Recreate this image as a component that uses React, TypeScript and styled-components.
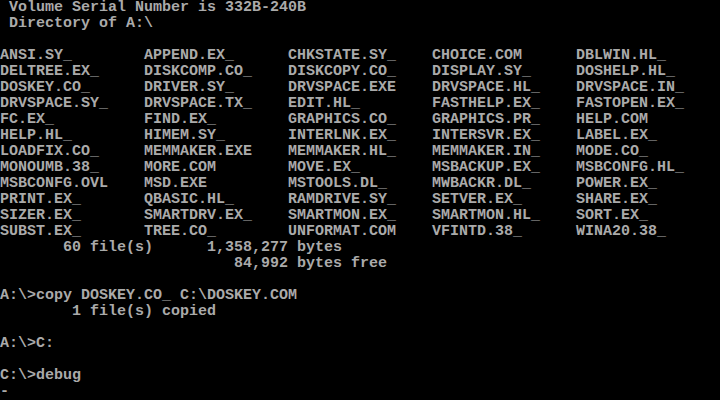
import styled, { createGlobalStyle } from "styled-components";

const GlobalStyle = createGlobalStyle`
  html, body {
    margin: 0;
    padding: 0;
    background: #000;
  }
`;

const Screen = styled.div`
  width: 720px;
  height: 400px;
  overflow: hidden;
  background: #000;
  color: #aaaaaa;
  font-family: "Liberation Mono", "DejaVu Sans Mono", monospace;
  font-size: 15px;
  font-weight: bold;
  line-height: 16px;
`;

const Line = styled.div`
  height: 16px;
  white-space: pre;
`;

const FileGrid = styled.div`
  display: grid;
  grid-template-columns: repeat(5, 144px);
  grid-auto-rows: 16px;
`;

const FileName = styled.span`
  white-space: pre;
`;

const files = [
  "ANSI.SY_", "APPEND.EX_", "CHKSTATE.SY_", "CHOICE.COM", "DBLWIN.HL_",
  "DELTREE.EX_", "DISKCOMP.CO_", "DISKCOPY.CO_", "DISPLAY.SY_", "DOSHELP.HL_",
  "DOSKEY.CO_", "DRIVER.SY_", "DRVSPACE.EXE", "DRVSPACE.HL_", "DRVSPACE.IN_",
  "DRVSPACE.SY_", "DRVSPACE.TX_", "EDIT.HL_", "FASTHELP.EX_", "FASTOPEN.EX_",
  "FC.EX_", "FIND.EX_", "GRAPHICS.CO_", "GRAPHICS.PR_", "HELP.COM",
  "HELP.HL_", "HIMEM.SY_", "INTERLNK.EX_", "INTERSVR.EX_", "LABEL.EX_",
  "LOADFIX.CO_", "MEMMAKER.EXE", "MEMMAKER.HL_", "MEMMAKER.IN_", "MODE.CO_",
  "MONOUMB.38_", "MORE.COM", "MOVE.EX_", "MSBACKUP.EX_", "MSBCONFG.HL_",
  "MSBCONFG.OVL", "MSD.EXE", "MSTOOLS.DL_", "MWBACKR.DL_", "POWER.EX_",
  "PRINT.EX_", "QBASIC.HL_", "RAMDRIVE.SY_", "SETVER.EX_", "SHARE.EX_",
  "SIZER.EX_", "SMARTDRV.EX_", "SMARTMON.EX_", "SMARTMON.HL_", "SORT.EX_",
  "SUBST.EX_", "TREE.CO_", "UNFORMAT.COM", "VFINTD.38_", "WINA20.38_",
];

export default function App() {
  return (
    <>
      <GlobalStyle />
      <Screen>
        <Line> Volume Serial Number is 332B-240B</Line>
        <Line> Directory of A:\</Line>
        <Line />
        <FileGrid>
          {files.map((f) => (
            <FileName key={f}>{f}</FileName>
          ))}
        </FileGrid>
        <Line>{"       60 file(s)      1,358,277 bytes"}</Line>
        <Line>{"                          84,992 bytes free"}</Line>
        <Line />
        <Line>{"A:\\>copy DOSKEY.CO_ C:\\DOSKEY.COM"}</Line>
        <Line>{"        1 file(s) copied"}</Line>
        <Line />
        <Line>{"A:\\>C:"}</Line>
        <Line />
        <Line>{"C:\\>debug"}</Line>
        <Line>-</Line>
      </Screen>
    </>
  );
}
